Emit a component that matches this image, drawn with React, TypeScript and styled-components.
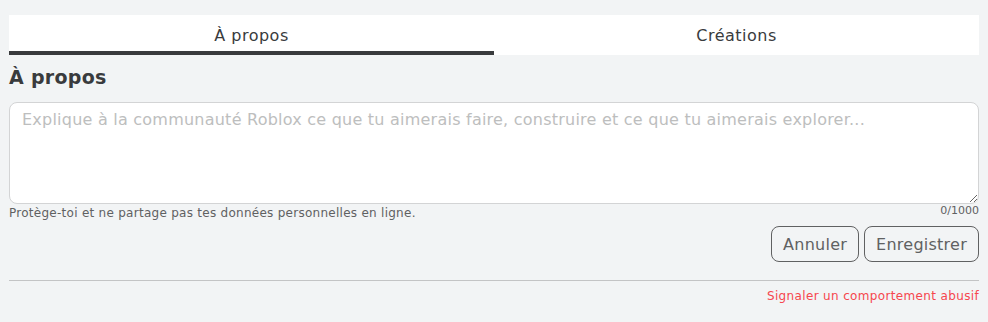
import * as React from 'react'
import styled, { createGlobalStyle } from 'styled-components'

const GlobalStyle = createGlobalStyle`
  html, body {
    margin: 0;
    padding: 0;
    background-color: #f2f4f5;
    font-family: 'DejaVu Sans', 'Open Sans', sans-serif;
    color: #393b3d;
  }
`

const Page = styled.div`
  padding: 15px 9px 0;
  width: 970px;
`

const Tabs = styled.div`
  display: flex;
  background-color: #fff;
  height: 40px;
`

const Tab = styled.button<{ $active?: boolean }>`
  flex: 1;
  border: 0;
  background: transparent;
  font-family: inherit;
  font-size: 16px;
  letter-spacing: 0.5px;
  color: #393b3d;
  padding: 4px 0 0;
  border-bottom: 4px solid ${p => (p.$active ? '#393b3d' : 'transparent')};
  cursor: pointer;
`

const Title = styled.h2`
  margin: 10px 0 13px;
  font-size: 19px;
  letter-spacing: 0.3px;
  font-weight: bold;
  line-height: 24px;
  color: #393b3d;
`

const TextArea = styled.textarea`
  display: block;
  box-sizing: border-box;
  width: 100%;
  height: 102px;
  border: 1px solid #d3d4d5;
  border-radius: 8px;
  background-color: #fff;
  padding: 7px 12px;
  font-family: inherit;
  font-size: 16px;
  letter-spacing: 0.23px;
  color: #393b3d;

  &::placeholder {
    color: #bdbebe;
  }
`

const InfoRow = styled.div`
  display: flex;
  justify-content: space-between;
  align-items: flex-start;
  margin-top: 2px;
`

const Hint = styled.span`
  font-size: 12px;
  letter-spacing: 0.27px;
  color: #606162;
`

const Counter = styled.span`
  font-size: 11px;
  color: #606162;
  margin-top: -2px;
`

const Actions = styled.div`
  display: flex;
  justify-content: flex-end;
  gap: 5px;
  margin-top: 6px;
`

const Button = styled.button`
  height: 36px;
  padding: 0 11px;
  border: 1px solid #606162;
  border-radius: 8px;
  background: transparent;
  font-family: inherit;
  font-size: 16px;
  letter-spacing: 0.25px;
  color: #606162;
  cursor: pointer;
`

const Divider = styled.hr`
  margin: 18px 0 0;
  border: 0;
  border-top: 1px solid #c3c4c5;
`

const Footer = styled.div`
  display: flex;
  justify-content: flex-end;
  padding-top: 8px;
`

const ReportLink = styled.a`
  font-size: 12px;
  letter-spacing: 0.35px;
  color: #f6464e;
  text-decoration: none;
`

const App = () => {
  const [tab, setTab] = React.useState('about')
  const [text, setText] = React.useState('')

  return (
    <Page>
      <GlobalStyle />
      <Tabs>
        <Tab $active={tab === 'about'} onClick={() => setTab('about')}>
          À propos
        </Tab>
        <Tab $active={tab === 'creations'} onClick={() => setTab('creations')}>
          Créations
        </Tab>
      </Tabs>
      <Title>À propos</Title>
      <TextArea
        value={text}
        onChange={e => setText(e.target.value)}
        placeholder="Explique à la communauté Roblox ce que tu aimerais faire, construire et ce que tu aimerais explorer..."
      />
      <InfoRow>
        <Hint>Protège-toi et ne partage pas tes données personnelles en ligne.</Hint>
        <Counter>{text.length}/1000</Counter>
      </InfoRow>
      <Actions>
        <Button>Annuler</Button>
        <Button>Enregistrer</Button>
      </Actions>
      <Divider />
      <Footer>
        <ReportLink href="#">Signaler un comportement abusif</ReportLink>
      </Footer>
    </Page>
  )
}

export default App
